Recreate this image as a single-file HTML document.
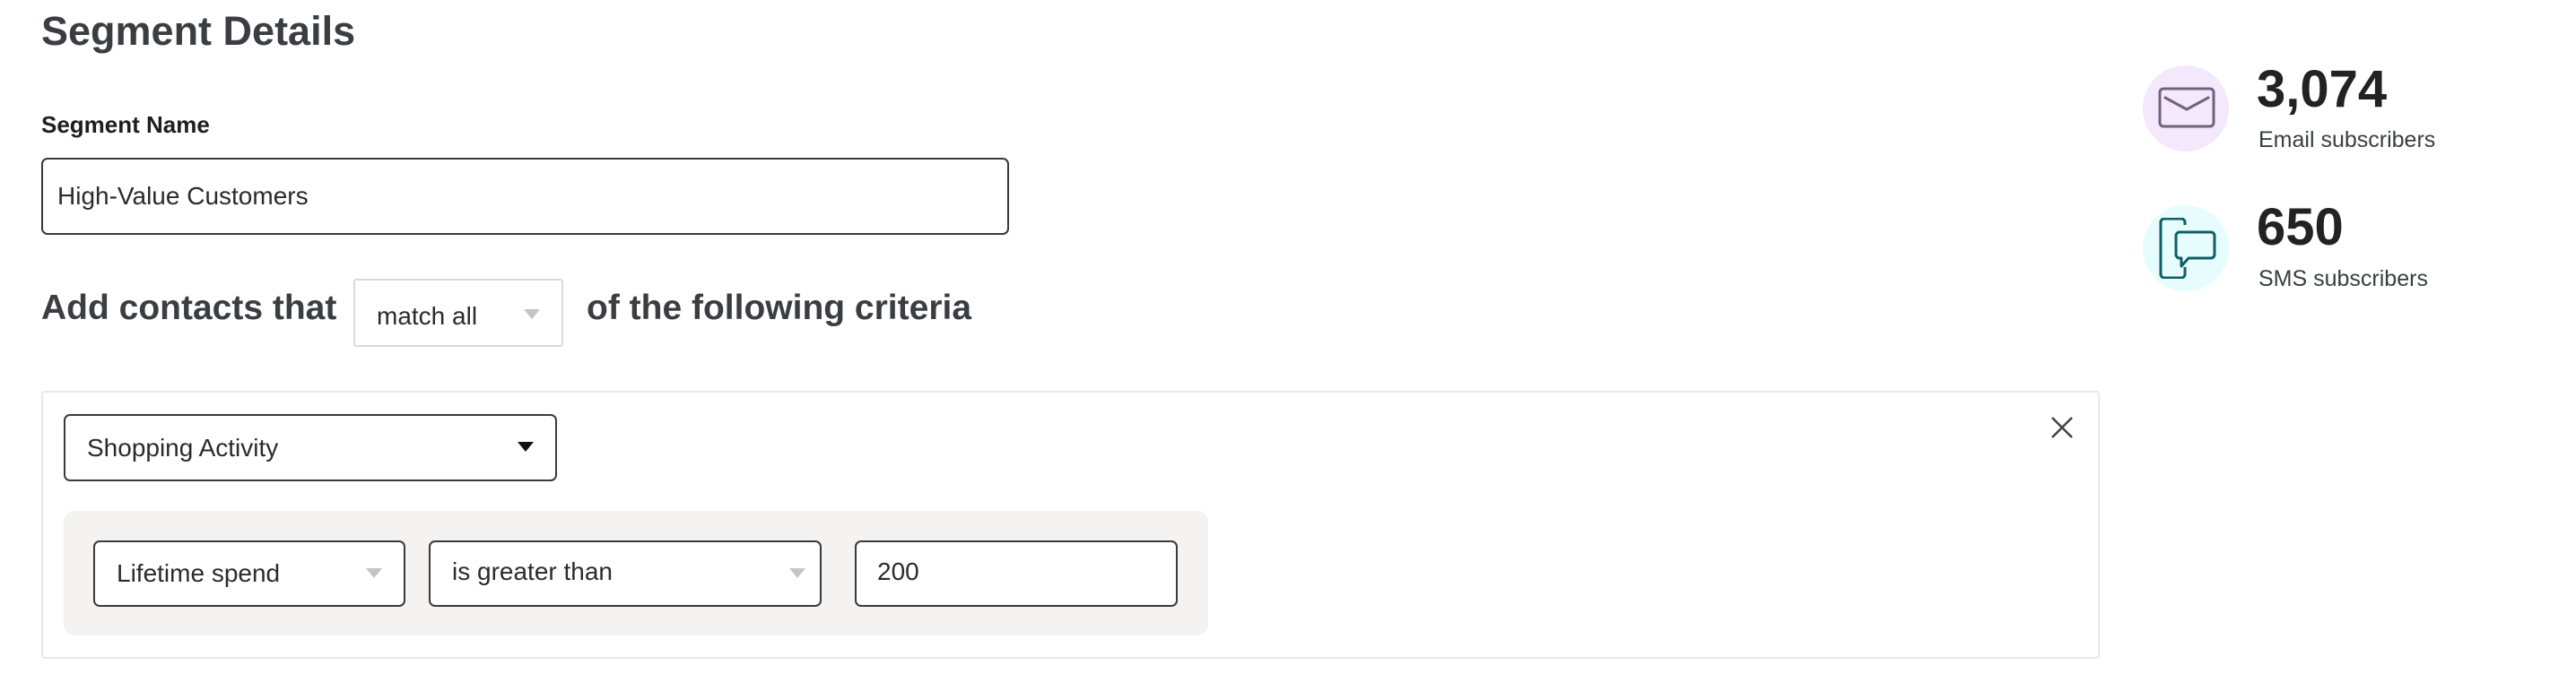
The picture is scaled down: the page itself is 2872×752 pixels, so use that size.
<!DOCTYPE html>
<html><head><meta charset="utf-8"><style>
*{box-sizing:border-box;margin:0;padding:0}
body{width:2872px;height:752px;background:#fff;font-family:"Liberation Sans",sans-serif;color:#373b3e;position:relative;overflow:hidden}
.a{position:absolute;white-space:nowrap}
.box{position:absolute;background:#fff;border:2px solid #3a3a3a;border-radius:7px}
.tri{position:absolute;width:0;height:0;border-left:9px solid transparent;border-right:9px solid transparent;border-top:11px solid #c4c4c4}
</style></head><body>
<div class="a" style="left:46px;top:9px;font-size:45px;font-weight:bold;color:#3a3e42">Segment Details</div>
<div class="a" style="left:46px;top:124px;font-size:26px;font-weight:bold;color:#1e1e1e">Segment Name</div>
<div class="box" style="left:46px;top:176px;width:1079px;height:86px"></div>
<div class="a" style="left:64px;top:203px;font-size:28px;color:#2b2b2b">High-Value Customers</div>
<div class="a" style="left:46px;top:322px;font-size:39px;font-weight:bold;color:#3a3e42">Add contacts that</div>
<div class="box" style="left:394px;top:311px;width:234px;height:76px;border-color:#dadada;border-radius:3px"></div>
<div class="a" style="left:420px;top:337px;font-size:28px;color:#2b2b2b">match all</div>
<div class="tri" style="left:584px;top:345px"></div>
<div class="a" style="left:654px;top:322px;font-size:39px;font-weight:bold;color:#3a3e42">of the following criteria</div>
<div style="position:absolute;left:46px;top:436px;width:2295px;height:299px;border:2px solid #e8e8e8;border-radius:4px"></div>
<div class="box" style="left:71px;top:462px;width:550px;height:75px"></div>
<div class="a" style="left:97px;top:484px;font-size:28px;color:#2b2b2b">Shopping Activity</div>
<div class="tri" style="left:577px;top:493px;border-top-color:#111"></div>
<svg class="a" style="left:2285px;top:463px" width="28" height="28" viewBox="0 0 28 28"><path d="M3 3L25 25M25 3L3 25" stroke="#444" stroke-width="2.6"/></svg>
<div style="position:absolute;left:71px;top:570px;width:1276px;height:139px;background:#f4f3f2;border-radius:12px"></div>
<div class="box" style="left:104px;top:603px;width:348px;height:74px"></div>
<div class="a" style="left:130px;top:624px;font-size:28px;color:#2b2b2b">Lifetime spend</div>
<div class="tri" style="left:408px;top:634px"></div>
<div class="box" style="left:478px;top:603px;width:438px;height:74px"></div>
<div class="a" style="left:504px;top:622px;font-size:28px;color:#2b2b2b">is greater than</div>
<div class="tri" style="left:880px;top:634px"></div>
<div class="box" style="left:953px;top:603px;width:360px;height:74px"></div>
<div class="a" style="left:978px;top:622px;font-size:28px;color:#2b2b2b">200</div>
<div style="position:absolute;left:2389px;top:73px;width:96px;height:96px;border-radius:50%;background:#f3e8fc"></div>
<svg class="a" style="left:2405px;top:96px" width="66" height="50" viewBox="0 0 66 50"><rect x="3" y="3" width="60" height="42" rx="4" fill="none" stroke="#75617f" stroke-width="3"/><path d="M9 13L33 26L57 13" fill="none" stroke="#75617f" stroke-width="3" stroke-linecap="round" stroke-linejoin="round"/></svg>
<div class="a" style="left:2516px;top:66px;font-size:58px;font-weight:bold;color:#222">3,074</div>
<div class="a" style="left:2518px;top:142px;font-size:25px;color:#3a3e42">Email subscribers</div>
<div style="position:absolute;left:2389px;top:229px;width:96px;height:96px;border-radius:50%;background:#e6fcfd"></div>
<svg class="a" style="left:2405px;top:243px" width="66" height="68" viewBox="0 0 66 68"><path d="M31 8V5a4 4 0 0 0-4-4H8a4 4 0 0 0-4 4v58a4 4 0 0 0 4 4h19a4 4 0 0 0 4-4V55" fill="none" stroke="#0f5f66" stroke-width="3"/><path d="M21 20a4 4 0 0 1 4-4h35a4 4 0 0 1 4 4v21a4 4 0 0 1-4 4H35l-8 9v-9h-2a4 4 0 0 1-4-4z" fill="#e6fcfd" stroke="#0f5f66" stroke-width="3" stroke-linejoin="round"/></svg>
<div class="a" style="left:2516px;top:220px;font-size:58px;font-weight:bold;color:#222">650</div>
<div class="a" style="left:2518px;top:297px;font-size:25px;color:#3a3e42">SMS subscribers</div>
</body></html>
